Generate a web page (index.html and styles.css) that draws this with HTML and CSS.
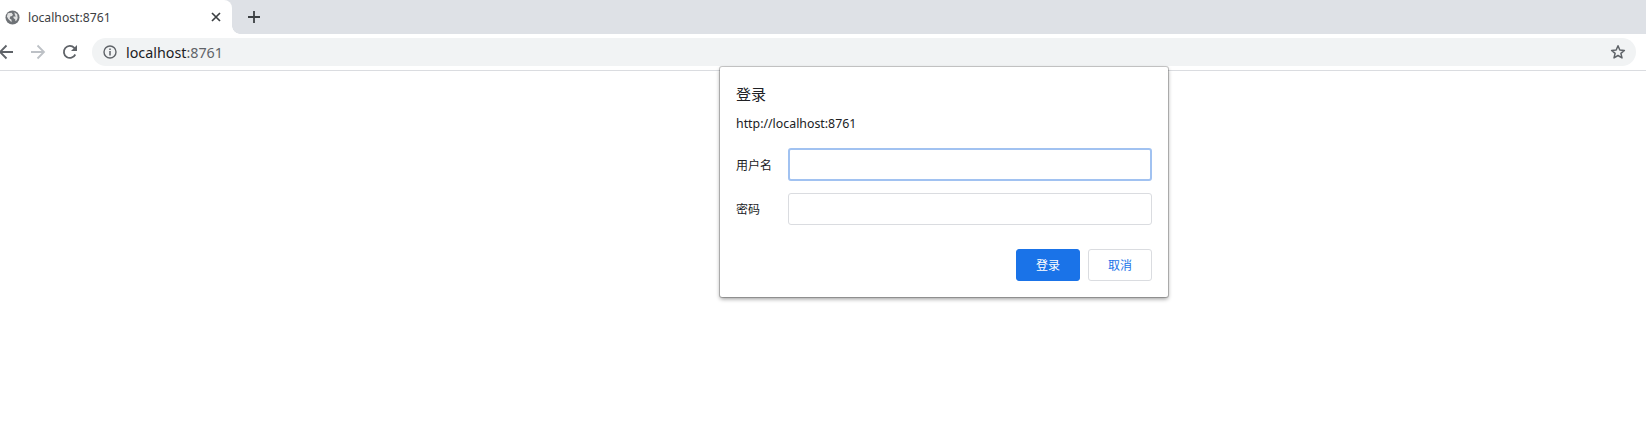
FILE: index.html
```html
<!DOCTYPE html>
<html lang="zh">
<head>
<meta charset="utf-8">
<title>localhost:8761</title>
<link rel="stylesheet" href="styles.css">
</head>
<body>
<header class="chrome">
  <div class="tabstrip">
    <div class="tab">
      <svg class="favicon" viewBox="0 0 16 16"><circle cx="8" cy="8" r="7.500" fill="#6e7276"/><path d="M3 3.500 7 3l1.500 2-1 1.500-2 .5-.5 2 2 1.500V13L3.500 9.500 2 7zM10 2.500l3 2 .5 4-1 2.500-1.500 1V10L9 8.500V7h2.500L10.500 5z" fill="#fff" fill-opacity=".8"/></svg>
      <span class="tab-title">localhost:8761</span>
      <svg class="tab-close" viewBox="0 0 10 10"><path d="M1 1l8 8M9 1 1 9" stroke="#3c4043" stroke-width="1.700" fill="none"/></svg>
    </div>
    <svg class="newtab" viewBox="0 0 12 12"><path d="M6 0v12M0 6h12" stroke="#3c4043" stroke-width="1.800" fill="none"/></svg>
  </div>
  <div class="toolbar">
    <svg class="nav nav-back" viewBox="0 0 16 16"><path d="M15 8H2M8.500 1.500 2 8l6.500 6.500" stroke="#5f6368" stroke-width="1.800" fill="none"/></svg>
    <svg class="nav nav-fwd" viewBox="0 0 16 16"><path d="M1 8h13M7.500 1.500 14 8l-6.500 6.500" stroke="#bdc1c6" stroke-width="1.800" fill="none"/></svg>
    <svg class="nav nav-reload" viewBox="0 0 16 16"><path d="M13.300 10.500A6 6 0 1 1 12.300 3.800L14 5.500" stroke="#5f6368" stroke-width="1.800" fill="none"/><path d="M15 1v6H9z" fill="#5f6368"/></svg>
    <div class="omnibox">
      <svg class="info" viewBox="0 0 14 14"><circle cx="7" cy="7" r="6" stroke="#5f6368" stroke-width="1.400" fill="none"/><path d="M7 6v4.500M7 3.500v1.500" stroke="#5f6368" stroke-width="1.500"/></svg>
      <span class="url">localhost<span class="url-port">:8761</span></span>
      <svg class="star" viewBox="0 0 16 16"><path d="M8 1.800 9.800 6l4.600.4-3.500 3 1.100 4.500L8 11.500l-4 2.400 1.100-4.500-3.500-3L6.200 6z" stroke="#5f6368" stroke-width="1.500" fill="none" stroke-linejoin="round"/></svg>
    </div>
  </div>
</header>
<main class="page"></main>
<section class="dialog">
  <h1 class="dialog-title">登录</h1>
  <p class="dialog-origin">http://localhost:8761</p>
  <div class="field field-first">
    <label class="field-label" for="user">用户名</label>
    <input class="field-input field-input-focus" id="user" type="text">
  </div>
  <div class="field">
    <label class="field-label" for="pass">密码</label>
    <input class="field-input" id="pass" type="password">
  </div>
  <div class="actions">
    <button class="btn btn-primary" type="button">登录</button>
    <button class="btn btn-secondary" type="button">取消</button>
  </div>
</section>
</body>
</html>
```

FILE: styles.css
```css
* { box-sizing: border-box; }
html, body { margin: 0; height: 100%; overflow: hidden; background: #fff; }
body {
  position: relative;
  font-family: "Noto Sans", "Noto Sans CJK SC", sans-serif;
  color: #202124;
}
.chrome { display: flex; flex-direction: column; height: 71px; border-bottom: 1px solid #dadce0; }
.tabstrip { display: flex; align-items: center; height: 34px; background: #dee1e6; }
.tab {
  position: relative;
  display: flex;
  align-items: center;
  width: 232px;
  height: 34px;
  padding: 0 11px 0 5px;
  background: #fff;
  border-top-right-radius: 8px;
}
.tab::after {
  content: "";
  position: absolute;
  right: -8px;
  bottom: 0;
  width: 8px;
  height: 8px;
  background: radial-gradient(circle at 100% 0, #dee1e6 7.500px, #fff 8px);
}
.favicon { width: 15px; height: 15px; flex: none; }
.tab-title { margin-left: 8px; font-size: 12.200px; color: #3c4043; flex: 1; }
.tab-close { width: 10px; height: 10px; }
.newtab { width: 12px; height: 12px; margin-left: 16px; }
.toolbar { display: flex; align-items: center; height: 36px; background: #fff; }
.nav { width: 16px; height: 16px; flex: none; }
.nav-back { margin-left: -2px; }
.nav-fwd { margin-left: 16px; }
.nav-reload { margin-left: 16px; }
.omnibox {
  display: flex;
  align-items: center;
  height: 28px;
  margin-left: 14px;
  width: 1544px;
  padding: 0 10px 0 11px;
  background: #f1f3f4;
  border-radius: 14px;
}
.info { width: 14px; height: 14px; flex: none; }
.url { margin-left: 9px; font-size: 14.300px; color: #202124; flex: 1; }
.url-port { color: #5f6368; }
.star { width: 16px; height: 16px; }
.page { height: 352px; background: #fff; }
.dialog {
  position: absolute;
  left: 720px;
  top: 67px;
  width: 448px;
  height: 230px;
  padding: 18px 16px 0;
  background: #fff;
  border-radius: 2px;
  box-shadow: 0 0 0 1px rgba(0,0,0,.2), 0 2px 4px rgba(0,0,0,.4);
}
.dialog-title { margin: 0; font-size: 15px; font-weight: 400; line-height: 18px; color: #202124; }
.dialog-origin { margin: 13px 0 0; font-size: 12.350px; line-height: 16px; color: #202124; }
.field { display: flex; align-items: center; height: 32px; margin-top: 12px; }
.field-first { height: 33px; margin-top: 16px; }
.field-label { width: 52px; font-size: 12px; color: #202124; flex: none; }
.field-input {
  width: 364px;
  height: 32px;
  padding: 0 8px;
  background: #fff;
  border: 1px solid #dadce0;
  border-radius: 3px;
  outline: none;
}
.field-input-focus { height: 33px; border: 2px solid #a1c2f1; }
.actions { display: flex; justify-content: flex-end; gap: 8px; margin-top: 24px; }
.btn {
  width: 64px;
  height: 32px;
  padding: 0;
  font-family: inherit;
  font-size: 12px;
  border-radius: 3px;
}
.btn-primary { background: #1a73e8; border: 1px solid #1a73e8; color: #fff; }
.btn-secondary { background: #fff; border: 1px solid #dadce0; color: #1a73e8; }
```
